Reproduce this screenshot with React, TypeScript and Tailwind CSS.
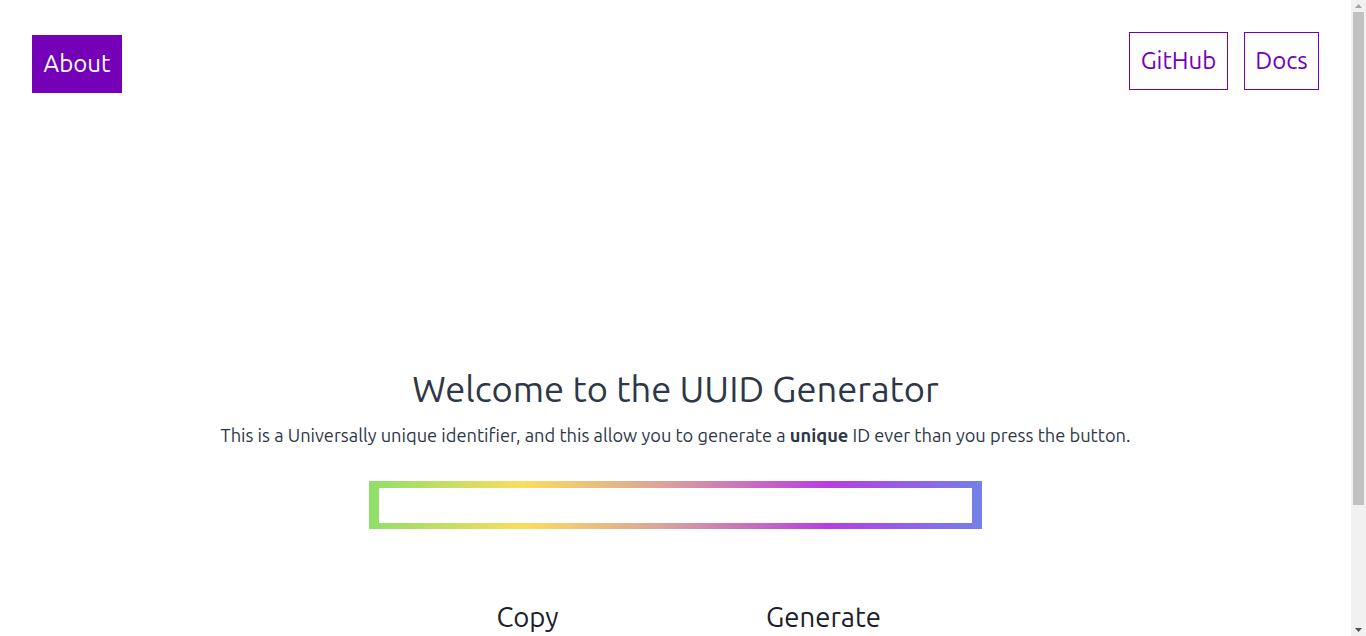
import React from 'react';

export default function App() {
  return (
    <div className="flex h-[636px] overflow-hidden bg-white font-['Ubuntu','Noto_Sans',sans-serif] text-[#2d3748]">
      <div className="min-w-0 flex-1">
        {/* Top bar */}
        <header className="flex items-start justify-between px-8 pt-8">
          <button className="mt-[3px] flex h-[58px] w-[90px] items-center justify-center bg-[#7400b8] text-2xl text-white">
            About
          </button>
          <nav className="flex gap-4">
            <NavButton label="GitHub" width="w-[99px]" />
            <NavButton label="Docs" width="w-[75px]" />
          </nav>
        </header>

        {/* Hero */}
        <main className="flex flex-col items-center pt-[276px] pb-[140px]">
          <h1 className="text-[36.3px] leading-10 text-[#2d3748]">Welcome to the UUID Generator</h1>
          <p className="mt-[12px] text-[18.25px] leading-7 text-[#2d3748]">
            This is a Universally unique identifier, and this allow you to generate a <b>unique</b> ID ever than you press the button.
          </p>

          <div className="mt-[32px] w-[613px] bg-[linear-gradient(90deg,#8ddf6a_0%,#fbdd5e_25%,#dba39a_48%,#b83ee0_75%,#7480e8_100%)] px-[10px] pt-[7px] pb-[6px]">
            <input className="block h-[35px] w-full bg-white outline-none" readOnly />
          </div>

          <div className="mt-[67px] flex gap-[56px] text-[27.5px] text-[#1a202c]">
            <button className="w-[240px]">Copy</button>
            <button className="w-[240px]">Generate</button>
          </div>
        </main>
      </div>

      {/* Scrollbar */}
      <div className="flex w-[15px] shrink-0 flex-col items-center bg-[#f1f1f1]">
        <div className="flex h-[12px] items-center justify-center">
          <svg width="7" height="4" viewBox="0 0 7 4"><path d="M3.5 0L7 4H0z" fill="#a3a3a3" /></svg>
        </div>
        <div className="h-[493px] w-[11px] bg-[#c1c1c1]" />
        <div className="flex-1" />
        <div className="flex h-[12px] items-center justify-center">
          <svg width="7" height="4" viewBox="0 0 7 4"><path d="M0 0h7L3.5 4z" fill="#505050" /></svg>
        </div>
      </div>
    </div>
  );
}

function NavButton({ label, width }: { label: string; width: string }) {
  return (
    <a href="#" className={`flex h-[58px] items-center justify-center border border-[#7400b8] text-2xl text-[#7400b8] ${width}`}>
      {label}
    </a>
  );
}
